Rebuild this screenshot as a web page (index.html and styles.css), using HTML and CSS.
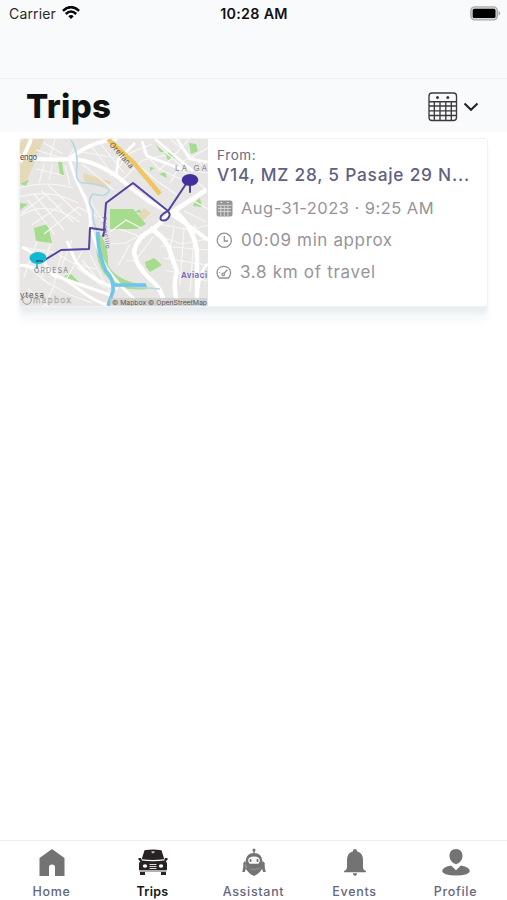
FILE: index.html
```html
<!DOCTYPE html>
<html lang="en">
<head>
<meta charset="utf-8">
<title>Trips</title>
<link rel="stylesheet" href="styles.css">
</head>
<body>
<div class="app">
  <div class="status">
    <div class="carrier"><span class="carrier-name">Carrier</span>
      <svg width="18" height="14" viewBox="0 0 18 14"><g fill="none" stroke="#080808" stroke-width="2.5"><path d="M.9 4.8Q9-2.6 17.1 4.8"/><path d="M3.8 8Q9 3 14.2 8"/></g><path d="M6.3 10.2Q9 7.8 11.7 10.2L9 13Z" fill="#080808"/></svg>
    </div>
    <span class="time">10:28 AM</span>
    <svg class="battery" width="31" height="15" viewBox="0 0 31 15"><rect x=".9" y=".9" width="26.4" height="13" rx="3.8" fill="#d8d9da" stroke="#a9aaaa" stroke-width="1.4"/><rect x="2.7" y="2.8" width="22.8" height="9.2" rx="1.6" fill="#000"/><path d="M28.5 5Q30.2 5.5 30.2 7.3T28.5 9.8Z" fill="#a9aaaa"/></svg>
  </div>
  <header class="header">
    <h1>Trips</h1>
    <div class="filter">
      <svg width="30" height="30" viewBox="0 0 30 30" fill="none" stroke="#3d393b" stroke-width="1.35"><rect x="1" y="1" width="27.5" height="27.5" rx="3"/><path d="M1 9.7H28.5M1 14H28.5M1 18.8H28.5M1 23.5H28.5M6.3 9.7V28M12 9.7V28M17.8 9.7V28M23.3 9.7V28"/><g fill="#3d393b" stroke="none"><circle cx="9.5" cy="5.5" r="1.5"/><circle cx="19.8" cy="5.5" r="1.5"/></g></svg>
      <svg width="16" height="10" viewBox="0 0 16 10"><path d="M1.5 1.5L8 7.8L14.5 1.5" fill="none" stroke="#222" stroke-width="2"/></svg>
    </div>
  </header>
  <main class="content">
    <article class="card">
      <svg class="map" width="188" height="167" viewBox="20 139 188 167">
        <rect x="20" y="139" width="188" height="167" fill="#e8e6e4"/>
        <path fill="#e5d9b8" d="M24 139H44L28 178L20 184V144Z M83 173L112 182L104 188L84 181Z M144 208L151 213L143 220L138 216Z"/>
        <g fill="#a5dc8d"><path d="M58 162L62 162L64 175L60 175Z M110 209H133L146 224L137 229H110Z M34 228L48 224L52 243L36 241Z M145 262L154 258L162 265L150 272L146 267Z M96 231Q109 241 108 265Q117 282 147 285V289Q119 292 108 278Q94 265 96 231Z M20 184L29 179L26 186Z M20 203L28 204L20 210Z M64 276L71 274L79 282L74 287Z M156 145L165 152L160 152Z M189 143L196 144L198 151L191 154Z M165 154L173 151L175 158L168 160Z M194 203L200 198L202 207L193 206Z M159 174L165 172L167 178Z M150 167L155 168L150 171Z M135 212L140 209L141 213Z"/></g>
        <g fill="none" stroke="#f7f7f6" stroke-width="1.2">
          <path d="M20 188Q45 180 73 188M20 197Q48 188 78 203M20 216Q45 198 80 222M28 200L55 235M34 194L64 230M41 190L73 222M48 185L81 216M22 213L47 194M32 225L62 204M44 234L78 207M22 247L57 253L72 263L96 269M25 264L50 285M37 241L24 277M50 244L42 277M62 251L54 284M72 240L60 270M84 248L67 278M36 169L62 175M44 165L39 183M52 165L49 180M65 165L70 185M36 150L71 161M44 143L63 154M55 139L50 158M74 148L67 160M82 152L117 158M92 147L114 176M101 144L124 173M82 164L114 190M83 192L103 221M78 207L97 217"/>
          <path d="M111 176L130 153L152 144M120 182L143 160L167 155M132 160L157 181L177 195M143 151L159 169L185 181M159 146L184 169L208 173M171 140L201 164M189 139L171 159L158 171M208 148L182 162L170 183M178 167L207 190M184 211L206 222M190 199L208 209M149 230L126 243L110 244M145 238L119 229M130 244L118 266M158 224L190 230L208 225M155 235L182 244L207 239M160 246L208 250M163 258L208 265M166 270L207 281M174 228L168 260M184 227L180 285M195 224L190 292M153 237L136 260L126 261M142 266L153 284M110 232L126 220L141 228"/>
          <path d="M42 279L68 294L92 303M76 267L105 288M82 260L102 284M90 255L112 296M28 289L48 306M54 286L44 306"/>
        </g>
        <g fill="none" stroke="#fff" stroke-linejoin="round">
          <path d="M31 139Q26 153 20 162M20 156Q40 161 67 159Q91 158 118 177Q134 191 150 202Q174 214 208 240M69 159Q89 142 117 139" stroke-width="4"/>
          <path d="M69 159Q76 181 81 190Q92 211 90 227L101 257Q108 276 142 306M67 241L76 262Q92 281 118 289M20 265Q53 269 77 288T118 306M22 247Q43 257 53 275L113 296" stroke-width="3"/>
          <path d="M206 190L174 211L152 230Q137 237 134 252Q136 266 150 279Q165 291 163 306M150 228Q166 237 171 254L177 272Q172 285 178 306M174 210Q193 226 197 251V306" stroke-width="4.5"/>
          <path d="M135 143L118 160L116 178M142 141L147 156L184 170M155 139L193 171M177 139L190 159L208 162M208 264Q198 270 197 306" stroke-width="2.6"/>
        </g>
        <g fill="none" stroke="#b5d6e5" stroke-width="1.6"><path d="M71 140Q78 151 77 166Q74 184 85 183Q108 185 109 191Q106 198 93 194Q86 200 93 210Q92 220 97 231M114 285L160 289"/><path d="M98 232Q97 251 106 271Q114 279 113 291L108 306M114 285H146" stroke="#70c5ea" stroke-width="3.6"/></g>
        <path d="M108 139L134 163L160 194" stroke="#efc65f" stroke-width="4.5" fill="none"/>
        <g fill="none" stroke="#51439e" stroke-width="2" stroke-linejoin="round" stroke-linecap="round"><path d="M38 261H43L61 250L89 249L90 228L104 230L106 203L133 183L168 211L188 181M105 229L103 236M168 211Q172 216 166 220Q159 222 161 216Q163 213 168 211M190 184V192"/></g>
        <path d="M37 260V269" stroke="#48bddc" stroke-width="2"/><ellipse cx="38" cy="258" rx="8.5" ry="6" fill="#11b9d3"/><path d="M36 261H43" stroke="#26719e" stroke-width="2"/><ellipse cx="190" cy="180" rx="8.3" ry="6" fill="#41309c"/>
        <g class="map-label"><text x="20" y="160" font-size="7.5" font-weight="500" textLength="17">engo</text><text x="175" y="171" font-size="8" fill="#8986a0" textLength="32">LA GA</text><text x="34" y="273" font-size="7" fill="#79798a" textLength="34">ORDESA</text><text x="181" y="278" font-size="8" font-weight="600" fill="#7163b4" textLength="26">Aviaci</text><text transform="translate(109 145) rotate(48)" font-size="7.5" textLength="32">Orellana</text><text transform="translate(102 217) rotate(83)" font-size="6" fill="#776fa2" textLength="32">Panecillo</text><text x="20" y="298" font-size="8" textLength="24">ytesa</text><circle cx="27" cy="300" r="4.3" fill="none" stroke="#999"/><text x="33" y="303" font-size="8.5" fill="#fff" stroke="#a5a5a5" stroke-width=".5" textLength="38">mapbox</text></g>
        <rect x="110" y="298" width="97" height="8" fill="#ccc" opacity=".75"/><text class="map-label" x="112" y="304.5" font-size="6.6" textLength="95" lengthAdjust="spacingAndGlyphs">© Mapbox © OpenStreetMap</text>
      </svg>
      <div class="details">
        <span class="from">From:</span>
        <strong class="address">V14, MZ 28, 5 Pasaje 29 N...</strong>
        <div class="row date"><svg width="17" height="17" viewBox="0 0 17 17"><rect x=".5" y=".5" width="16" height="16" rx="2" fill="#969399"/><path d="M1.5 5.3H15.5M2 8.5H15M2 11.5H15M4.8 5.5V16M8.3 5.5V16M11.9 5.5V16" stroke="#ddd" stroke-width=".9"/><path d="M4.5 2.5H6M11 2.5H12.5" stroke="#eee"/></svg><span>Aug-31-2023 · 9:25 AM</span></div>
        <div class="row duration"><svg width="17" height="17" viewBox="0 0 17 17" fill="none" stroke="#929096" stroke-width="1.3"><circle cx="8.3" cy="8.3" r="7.1"/><path d="M8.3 4V9H12"/></svg><span>00:09 min approx</span></div>
        <div class="row distance"><svg width="17" height="17" viewBox="0 0 17 17" fill="none" stroke="#929096" stroke-width="1.3"><path d="M3.3 14Q1 11.5 1 8.5A6.8 6.2 0 0 1 14.6 8.5Q14.6 12 12.5 14Z"/><circle cx="7.2" cy="10.4" r="1.3"/><path d="M8.2 9.2L11.3 5.8M3.5 8.2V9"/></svg><span>3.8 km of travel</span></div>
      </div>
    </article>
  </main>
  <nav class="tabs">
    <div class="tab"><svg width="32" height="30" viewBox="0 0 32 30"><path d="M3.5 10L16 1L28.5 10V28H19V19Q19 16.5 16 16.5T13 19V28H3.5Z" fill="#737373"/></svg><span class="home">Home</span></div>
    <div class="tab active"><svg width="32" height="30" viewBox="0 0 32 30"><path d="M7.5 2.2Q16 .6 24.5 2.2L27.3 11.3Q16 12.8 4.7 11.3ZM1.5 10H4L4.8 12.6Q16 14 27.2 12.6L28 10H30.5V12L28.8 13L30 15.5V22H2V15.5L3.2 13L1.5 12ZM3 24H8V27H3ZM24 24H29V27H24Z" fill="#292224"/><path d="M2.5 23H29.5" stroke="#8b8583" stroke-width="1.3"/><ellipse cx="8" cy="18" rx="2.2" ry="1.8" fill="#fff"/><ellipse cx="24" cy="18" rx="2.2" ry="1.8" fill="#fff"/><path d="M12.5 16.5H19.5M12.5 18.5H19.5M12.5 20.5H19.5" stroke="#ded9d8"/><path d="M14.5 3.2H17.5V4.6L16 5.6L14.5 4.6Z" fill="#bbb"/></svg><span class="trips">Trips</span></div>
    <div class="tab"><svg width="32" height="30" viewBox="0 0 32 30"><g fill="#737373"><circle cx="16" cy="2" r="1.5"/><path d="M15.3 2H16.7V6H15.3ZM7.5 14Q8 5 16 5T24.5 14L24 21Q21 26 16 28Q11 26 8 21ZM7 13L5.3 15V19L4.3 24H6.8L8.5 19ZM25 13L26.7 15V19L27.7 24H25.2L23.5 19Z"/></g><path d="M10 13Q10 8.5 16 8.5T22 13L20.5 15.8H11.5Z" fill="#f8f8f8"/><g fill="#737373"><rect x="11.5" y="11" width="2" height="3" rx="1"/><rect x="18.5" y="11" width="2" height="3" rx="1"/></g><path d="M12 21Q16 22.5 22.5 20" stroke="#929292" fill="none"/></svg><span class="assistant">Assistant</span></div>
    <div class="tab"><svg width="32" height="30" viewBox="0 0 32 30"><path d="M16 1Q18 1 18 3.3Q24 5 24 12V19Q24 22 27 23V24.2H5V23Q8 22 8 19V12Q8 5 14 3.3Q14 1 16 1M13.8 25.3H18.2Q17.8 28 16 28T13.8 25.3" fill="#737373"/></svg><span class="events">Events</span></div>
    <div class="tab"><svg width="32" height="30" viewBox="0 0 32 30"><path d="M16 1C20.5 1 22.5 4 22.5 8C22.5 12 19 16 16 16S9.5 12 9.5 8C9.5 4 11.5 1 16 1ZM11 17.6Q12.5 19 16 22.2Q19.5 19 21 17.6Q29.8 19 29.8 23.5Q28 27.6 16 27.6T2.2 23.5Q2.2 19 11 17.6Z" fill="#737373"/></svg><span class="profile">Profile</span></div>
  </nav>
</div>
</body>
</html>
```

FILE: styles.css
```css
* { box-sizing: border-box; }
body { margin: 0; background: #fff; font-family: Inter, "Liberation Sans", sans-serif; }
svg { display: block; flex-shrink: 0; }
span, strong { white-space: nowrap; }
.app { width: 507px; height: 900px; display: flex; flex-direction: column; background: #fff; }
.status { height: 79px; display: grid; grid-template-columns: 1fr auto 1fr; align-items: start; padding: 6px 6px 0 9px; background: #f8fafc; border-bottom: 1px solid #eef0f2; }
.carrier { display: flex; gap: 6px; font-size: 14px; line-height: 16px; color: #292929; letter-spacing: .15px; }
.time { font-size: 14.3px; line-height: 16px; font-weight: 600; color: #101010; letter-spacing: .3px; margin-right: 2px; }
.battery { justify-self: end; }
.header { height: 53px; padding: 1px 28px 0 26px; display: flex; justify-content: space-between; align-items: center; background: #f8fafc; }
h1 { margin: 0; font-size: 33px; font-weight: 800; line-height: 48px; color: #111; letter-spacing: .3px; }
.filter { display: flex; align-items: center; gap: 5px; margin-top: 1px; }
.content { flex: 1; padding: 6px 19px; }
.card { width: 469px; height: 169px; display: flex; border: 1px solid #f0f2f4; border-radius: 3px; background: #fff; box-shadow: 0 7px 5px -1px #e8edef, 0 16px 7px -1px #f7f9fa; }
.map { font-family: Inter, sans-serif; }
.map-label { fill: #555; }
.details { flex: 1; min-width: 0; padding: 7px 0 0 8px; display: flex; flex-direction: column; align-items: flex-start; }
.from { margin-left: 1px; font-size: 13.5px; line-height: 18px; color: #686984; letter-spacing: .6px; }
.address { margin-left: 1px; font-size: 17.3px; font-weight: 500; line-height: 22px; color: #60617f; letter-spacing: .77px; }
.row { height: 32px; display: flex; align-items: center; gap: 8px; color: #96949a; font-size: 16.5px; letter-spacing: .46px; }
.date { margin-top: 6px; }
.duration { font-size: 17px; letter-spacing: .62px; }
.distance { gap: 7px; font-size: 17px; letter-spacing: .7px; }
.tabs { height: 60px; display: grid; grid-template-columns: repeat(5, 101px); justify-content: center; border-top: 1px solid #ededed; background: #fff; }
.tab { display: flex; flex-direction: column; align-items: center; padding-top: 7px; gap: 6px; font-size: 12.5px; font-weight: 500; line-height: 16px; letter-spacing: .7px; color: #65667f; }
.active { color: #161616; font-weight: 600; letter-spacing: .3px; }
```
